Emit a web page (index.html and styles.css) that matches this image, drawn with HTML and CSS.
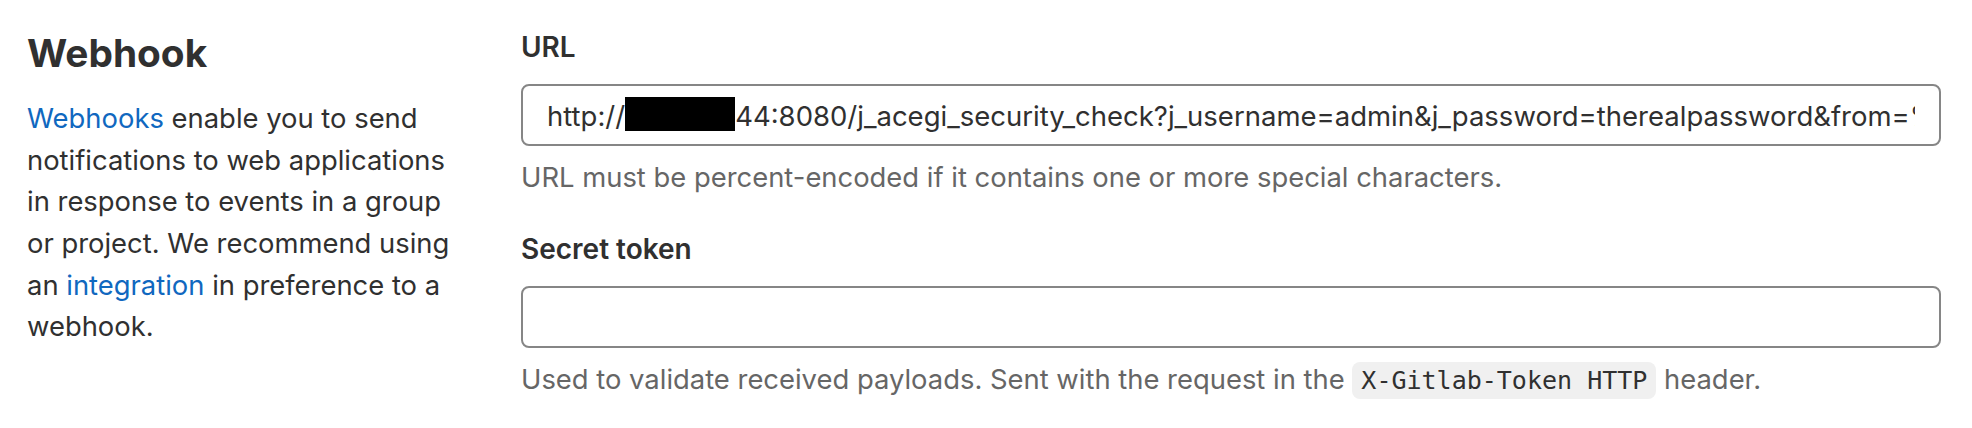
FILE: index.html
```html
<!DOCTYPE html>
<html lang="en">
<head>
<meta charset="utf-8">
<title>Webhook</title>
<link rel="stylesheet" href="styles.css">
</head>
<body>
<section class="settings-section">
  <div class="sidebar">
    <h4 class="title">Webhook</h4>
    <p class="desc"><a class="link" href="#">Webhooks</a> enable you to send notifications to web applications in response to events in a group or project. We recommend using an <a class="link" href="#">integration</a> in preference to a webhook.</p>
  </div>
  <div class="form">
    <div class="group">
      <label class="label">URL</label>
      <div class="field"><span class="value">http://<span class="redact"></span>44:8080/j_acegi_security_check?j_username=admin&amp;j_password=therealpassword&amp;from=%2F&amp;Submit=Sign+in</span></div>
      <p class="help">URL must be percent-encoded if it contains one or more special characters.</p>
    </div>
    <div class="group group-second">
      <label class="label">Secret token</label>
      <div class="field"></div>
      <p class="help">Used to validate received payloads. Sent with the request in the <code class="code">X-Gitlab-Token HTTP</code> header.</p>
    </div>
  </div>
</section>
</body>
</html>
```

FILE: styles.css
```css
html, body {
  margin: 0;
  padding: 0;
  background: #ffffff;
}

body {
  font-family: Inter, "Noto Sans", sans-serif;
  color: #303030;
  font-size: 27.4px;
  line-height: 41.67px;
}

.settings-section {
  display: grid;
  grid-template-columns: 464px minmax(0, 1fr);
  column-gap: 30px;
  padding: 24px 31px 0 27px;
}

.sidebar {
  min-width: 0;
}

.title {
  margin: 4px 0 0;
  font-size: 38.8px;
  line-height: 49px;
  font-weight: 700;
  color: #303030;
}

.desc {
  margin: 21px 0 0;
  max-width: 444px;
}

.link {
  color: #1068bf;
  text-decoration: none;
}

.form {
  min-width: 0;
}

.label {
  display: block;
  margin: 3px 0 15px;
  font-size: 28px;
  font-weight: 600;
}

.group-second .label {
  margin-top: 31px;
}

.field {
  box-sizing: border-box;
  height: 62px;
  border: 2px solid #868686;
  border-radius: 8px;
  padding: 4px 24px 0;
  display: flex;
  align-items: center;
  overflow: hidden;
  background: #ffffff;
  font-size: 27.5px;
}

.value {
  white-space: nowrap;
  overflow: hidden;
  flex: 1;
  min-width: 0;
}

.redact {
  display: inline-block;
  width: 110px;
  height: 34px;
  background: #000000;
  vertical-align: -5px;
}

.help {
  margin: 11px 0 0;
  color: #666666;
}

.code {
  font-family: "DejaVu Sans Mono", "Liberation Mono", monospace;
  font-size: 25px;
  color: #303030;
  background: #f0f0f0;
  border-radius: 8px;
  padding: 4px 9px;
}
```
